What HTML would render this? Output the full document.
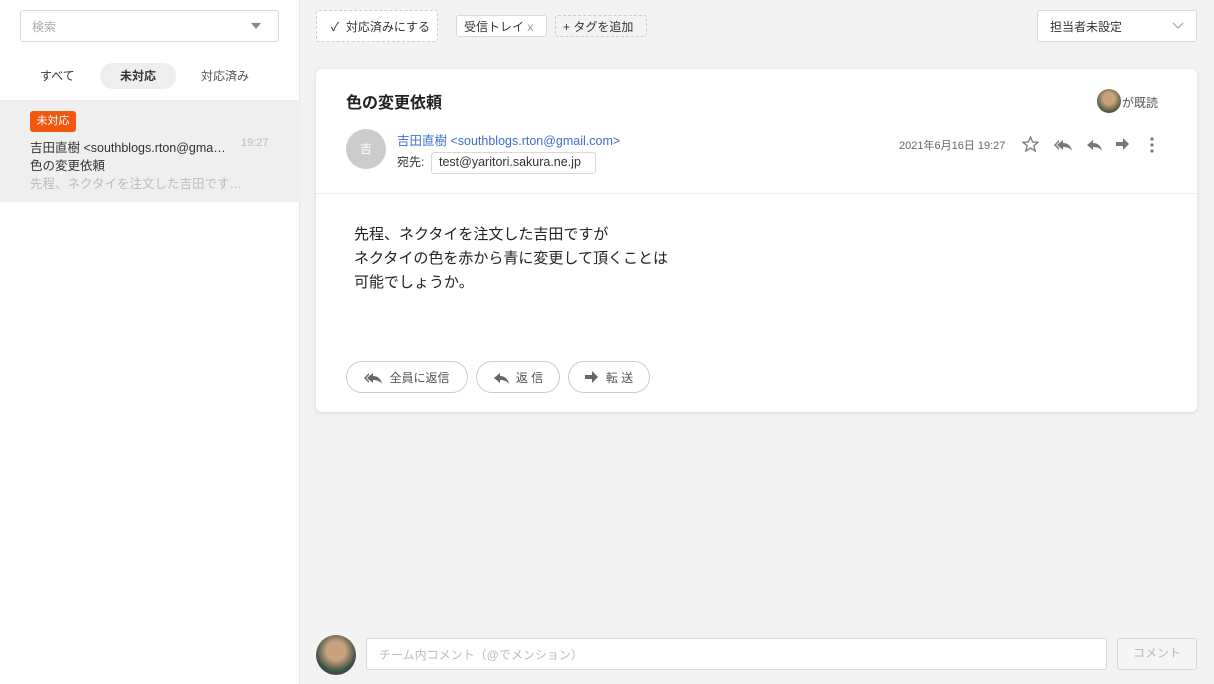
<!DOCTYPE html>
<html><head><meta charset="utf-8"><style>
*{box-sizing:border-box;margin:0;padding:0}
body{width:1214px;height:684px;overflow:hidden;background:#f3f3f3;font-family:"Liberation Sans","Noto Sans CJK JP",sans-serif;color:#333;position:relative;font-size:13px}
.abs{position:absolute;white-space:nowrap}
.side{left:0;top:0;width:300px;height:684px;background:#fff;border-right:1px solid #e6e6e6}
.btn{border:1px solid #d8d8d8;border-radius:3px;background:#fff}
.pill{position:absolute;top:361px;height:32px;border:1px solid #ccc;border-radius:16px;background:#fff;font-size:12px;color:#555;display:flex;align-items:center;justify-content:center;gap:7px;white-space:nowrap}
svg{display:block}
</style></head><body>
<svg width="0" height="0" style="position:absolute"><defs>
<path id="rep" d="M7 3 L1 8 L7 13 L7 10 C11 10 14 11 16 14 C15 9 12 6 7 6 Z"/>
</defs></svg>
<div class="abs side">
 <div class="abs btn" style="left:20px;top:10px;width:259px;height:32px;font-size:12px;color:#aaa;padding:7px 11px">検索<span class="abs" style="right:17px;top:12px;border-left:5px solid transparent;border-right:5px solid transparent;border-top:6px solid #888"></span></div>
 <div class="abs" style="left:40px;top:67px;font-size:12px">すべて</div>
 <div class="abs" style="left:100px;top:63px;width:76px;height:26px;border-radius:13px;background:#eee;font-size:12px;font-weight:bold;text-align:center;line-height:26px">未対応</div>
 <div class="abs" style="left:201px;top:67px;font-size:12px;color:#555">対応済み</div>
 <div class="abs" style="left:0;top:100px;width:300px;height:102px;background:#efefef">
  <div class="abs" style="left:30px;top:11px;width:46px;height:21px;background:#f2570f;color:#fff;border-radius:3px;font-size:11px;text-align:center;line-height:21px">未対応</div>
  <div class="abs" style="left:30px;top:37px;font-size:12.5px;color:#333">吉田直樹 &lt;southblogs.rton@gma…</div>
  <div class="abs" style="left:241px;top:37px;font-size:11px;color:#bbb">19:27</div>
  <div class="abs" style="left:30px;top:55px;font-size:12.5px">色の変更依頼</div>
  <div class="abs" style="left:30px;top:73px;font-size:12.5px;color:#bbb">先程、ネクタイを注文した吉田です…</div>
 </div>
</div>
<div class="abs" style="left:316px;top:10px;width:122px;height:32px;border:1px dashed #ccc;border-radius:3px;background:#fff;font-size:12px;padding:7px 14px">✓&nbsp; 対応済みにする</div>
<div class="abs btn" style="left:456px;top:15px;width:91px;height:22px;font-size:12px;padding:2px 7px">受信トレイ <span style="color:#999">x</span></div>
<div class="abs" style="left:555px;top:15px;width:92px;height:22px;border:1px dashed #ccc;border-radius:3px;font-size:12px;padding:2px 7px">+ タグを追加</div>
<div class="abs btn" style="left:1037px;top:10px;width:160px;height:32px;font-size:12px;padding:7px 12px">担当者未設定
 <svg class="abs" style="right:12px;top:11px" width="12" height="8"><path d="M1 1 L6 6 L11 1" stroke="#999" fill="none"/></svg></div>
<div class="abs" style="left:316px;top:69px;width:881px;height:343px;background:#fff;border-radius:6px;box-shadow:0 1px 4px rgba(0,0,0,.12)">
 <div class="abs" style="left:30px;top:20px;font-size:16px;font-weight:bold;color:#222">色の変更依頼</div>
 <div class="abs" style="left:781px;top:20px;width:24px;height:24px;border-radius:50%;background:radial-gradient(circle at 50% 40%,#c9a27e 30%,#4b5a3a 70%)"></div>
 <div class="abs" style="left:806px;top:25px;font-size:12px;color:#555">が既読</div>
 <div class="abs" style="left:30px;top:60px;width:40px;height:40px;border-radius:50%;background:#ccc;color:#fff;font-size:12px;text-align:center;line-height:40px">吉</div>
 <div class="abs" style="left:81px;top:61px;font-size:12.5px;color:#3d6fd1">吉田直樹 &lt;southblogs.rton@gmail.com&gt;</div>
 <div class="abs" style="left:81px;top:84px;font-size:12px">宛先:</div>
 <div class="abs btn" style="left:115px;top:83px;width:165px;height:22px;font-size:12.5px;padding:2px 7px">test@yaritori.sakura.ne.jp</div>
 <div class="abs" style="left:583px;top:68px;font-size:11px;color:#666">2021年6月16日 19:27</div>
 <svg class="abs" style="left:706px;top:67px" width="17" height="16"><path d="M8.5 1 L10.6 6 L16 6.3 L11.8 9.8 L13.2 15 L8.5 12 L3.8 15 L5.2 9.8 L1 6.3 L6.4 6 Z" stroke="#777" stroke-width="1.3" fill="none"/></svg>
 <svg class="abs" style="left:738px;top:68px" width="18" height="14" fill="#777"><path d="M5 3 L0 8 L5 13 L5 11 L2 8 L5 5 Z"/><use href="#rep" x="2"/></svg>
 <svg class="abs" style="left:770px;top:68px" width="16" height="14" fill="#777"><use href="#rep"/></svg>
 <svg class="abs" style="left:800px;top:69px" width="14" height="12" fill="#777"><path d="M0 4 H7 V0 L13 6 L7 12 V8 H0 Z"/></svg>
 <svg class="abs" style="left:833px;top:68px" width="6" height="16" fill="#777"><circle cx="3" cy="2" r="1.6"/><circle cx="3" cy="8" r="1.6"/><circle cx="3" cy="14" r="1.6"/></svg>
 <div class="abs" style="left:0;top:124px;width:881px;border-top:1px solid #eee"></div>
 <div class="abs" style="left:38px;top:154px;font-size:15px;line-height:24px;color:#222">先程、ネクタイを注文した吉田ですが<br>ネクタイの色を赤から青に変更して頂くことは<br>可能でしょうか。</div>
</div>
<div class="pill" style="left:346px;width:122px"><svg width="18" height="14" fill="#666"><path d="M5 3 L0 8 L5 13 L5 11 L2 8 L5 5 Z"/><use href="#rep" x="2"/></svg>全員に返信</div>
<div class="pill" style="left:476px;width:84px"><svg width="16" height="14" fill="#666"><use href="#rep"/></svg>返 信</div>
<div class="pill" style="left:568px;width:82px"><svg width="14" height="12" fill="#666"><path d="M0 4 H7 V0 L13 6 L7 12 V8 H0 Z"/></svg>転 送</div>
<div class="abs" style="left:316px;top:635px;width:40px;height:40px;border-radius:50%;background:radial-gradient(circle at 50% 40%,#c9a27e 30%,#3d5040 65%)"></div>
<div class="abs btn" style="left:366px;top:638px;width:741px;height:32px;font-size:12px;color:#bbb;padding:7px 12px">チーム内コメント（@でメンション）</div>
<div class="abs btn" style="left:1117px;top:638px;width:80px;height:32px;font-size:12px;color:#bbb;background:#f5f5f5;text-align:center;line-height:29px">コメント</div>
</body></html>
